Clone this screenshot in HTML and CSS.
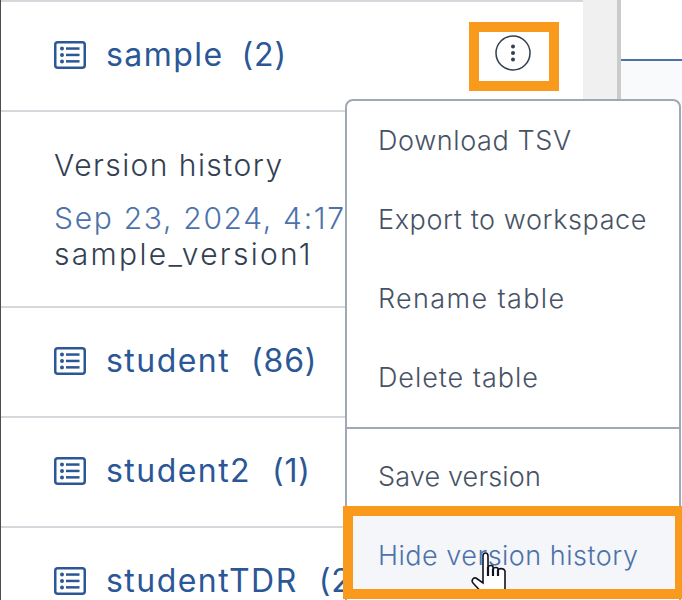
FILE: index.html
```html
<!DOCTYPE html>
<html lang="en">
<head>
<meta charset="utf-8">
<title>Tables</title>
<link rel="stylesheet" href="styles.css">
</head>
<body>
<div class="page">
  <aside class="sidebar">
    <div class="row row-first">
      <svg class="table-icon" viewBox="0 0 32 28"><rect x="1.25" y="1.25" width="29.5" height="25.5" rx="2.5" class="frame"/><circle cx="8" cy="7.6" r="2"/><circle cx="8" cy="14" r="2"/><circle cx="8" cy="20.4" r="2"/><rect x="12" y="6.3" width="13.5" height="2.5"/><rect x="12" y="12.7" width="13.5" height="2.5"/><rect x="12" y="19.1" width="13.5" height="2.5"/></svg>
      <span class="name name-short">sample</span><span class="count">(2)</span>
    </div>
    <div class="history">
      <div class="history-title">Version history</div>
      <div class="history-date">Sep 23, 2024, 4:17 PM</div>
      <div class="history-name">sample_version1</div>
    </div>
    <div class="row">
      <svg class="table-icon" viewBox="0 0 32 28"><rect x="1.25" y="1.25" width="29.5" height="25.5" rx="2.5" class="frame"/><circle cx="8" cy="7.6" r="2"/><circle cx="8" cy="14" r="2"/><circle cx="8" cy="20.4" r="2"/><rect x="12" y="6.3" width="13.5" height="2.5"/><rect x="12" y="12.7" width="13.5" height="2.5"/><rect x="12" y="19.1" width="13.5" height="2.5"/></svg>
      <span class="name">student</span><span class="count">(86)</span>
    </div>
    <div class="row">
      <svg class="table-icon" viewBox="0 0 32 28"><rect x="1.25" y="1.25" width="29.5" height="25.5" rx="2.5" class="frame"/><circle cx="8" cy="7.6" r="2"/><circle cx="8" cy="14" r="2"/><circle cx="8" cy="20.4" r="2"/><rect x="12" y="6.3" width="13.5" height="2.5"/><rect x="12" y="12.7" width="13.5" height="2.5"/><rect x="12" y="19.1" width="13.5" height="2.5"/></svg>
      <span class="name">student2</span><span class="count">(1)</span>
    </div>
    <div class="row">
      <svg class="table-icon" viewBox="0 0 32 28"><rect x="1.25" y="1.25" width="29.5" height="25.5" rx="2.5" class="frame"/><circle cx="8" cy="7.6" r="2"/><circle cx="8" cy="14" r="2"/><circle cx="8" cy="20.4" r="2"/><rect x="12" y="6.3" width="13.5" height="2.5"/><rect x="12" y="12.7" width="13.5" height="2.5"/><rect x="12" y="19.1" width="13.5" height="2.5"/></svg>
      <span class="name">studentTDR</span><span class="count">(2</span>
    </div>
  </aside>
  <div class="scroll-track"></div>
  <main class="main"><div class="main-panel"></div></main>

  <div class="kebab-box">
    <svg class="kebab" viewBox="0 0 36 36"><circle cx="18" cy="18" r="17" class="ring"/><circle cx="18" cy="11.5" r="2"/><circle cx="18" cy="18" r="2"/><circle cx="18" cy="24.5" r="2"/></svg>
  </div>

  <div class="menu">
    <div class="menu-group">
      <div class="item">Download TSV</div>
      <div class="item">Export to workspace</div>
      <div class="item item-rename">Rename table</div>
      <div class="item item-delete">Delete table</div>
    </div>
    <div class="menu-group group-last">
      <div class="item item-save">Save version</div>
      <div class="item item-hover">Hide version history</div>
    </div>
  </div>
  <svg class="cursor" viewBox="0 0 36 46"><path d="M12 4c0-4 5-4 5 0V15c1-2 5-2 5 0v2c1-2 5-2 5 0v1c1-2 6-2 7 1V44H14L2 31c-2-2 0-6 3-5l7 5Z"/><path d="M17 15v9M22 17v7M27 18v6" class="cursor-line"/></svg>
  <div class="hover-box"></div>
</div>
</body>
</html>
```
FILE: styles.css
```css
* { box-sizing: border-box; }
html, body { margin: 0; padding: 0; }
body {
  width: 682px;
  height: 600px;
  overflow: hidden;
  background: #fff;
  font-family: "Inter", "Liberation Sans", sans-serif;
}
.page {
  position: relative;
  display: flex;
  width: 682px;
  height: 600px;
  overflow: hidden;
}
.sidebar {
  width: 583px;
  flex: none;
  border-left: 1px solid #4d4d4d;
}
.row {
  display: flex;
  align-items: center;
  height: 110px;
  padding: 0 0 3px 53px;
  border-bottom: 2px solid #d5d9de;
  color: #2b5797;
  font-size: 32px;
  letter-spacing: 1.45px;
  font-weight: 400;
  white-space: nowrap;
}
.row-first {
  border-top: 2px solid #d5d9de;
  height: 112px;
}
.table-icon {
  width: 32px;
  height: 28px;
  flex: none;
  margin-right: 20px;
  fill: #2b5797;
}
.frame {
  fill: none;
  stroke: #2b5797;
  stroke-width: 2.5;
}
.name { margin-right: 21px; }
.name-short { margin-right: 18px; }
.count { letter-spacing: .8px; }
.history {
  height: 196px;
  padding: 35px 0 0 53px;
  border-bottom: 2px solid #d5d9de;
  font-size: 30px;
  font-weight: 350;
  line-height: 36px;
  letter-spacing: 1.45px;
  color: #333f52;
  overflow: hidden;
  white-space: nowrap;
}
.history-title { margin-bottom: 17px; }
.history-date { color: #4d72aa; letter-spacing: 1.7px; }
.history-name { letter-spacing: 2.3px; }
.scroll-track {
  width: 38px;
  flex: none;
  background: #f0f0f0;
  border-right: 4px solid #cbcbcb;
}
.main {
  flex: 1;
  padding-top: 59px;
  background: #fff;
}
.main-panel {
  height: 541px;
  background: #f9fafc;
  border-top: 2px solid #4d72aa;
}
.kebab-box {
  position: absolute;
  left: 469px;
  top: 22px;
  width: 90px;
  height: 69px;
  padding: 0 3px 8px 0;
  border: 10px solid #fa9a1c;
  background: #fff;
  display: flex;
  align-items: center;
  justify-content: center;
}
.kebab { width: 36px; height: 36px; fill: #333f52; }
.ring { fill: none; stroke: #333f52; stroke-width: 1.5; }
.menu {
  position: absolute;
  left: 345px;
  top: 99px;
  width: 336px;
  height: 520px;
  background: #fff;
  border: 2px solid #a0a8b5;
  border-radius: 8px;
  color: #475265;
  font-size: 27px;
  font-weight: 350;
  letter-spacing: .6px;
}
.menu-group { border-bottom: 2px solid #a0a8b5; height: 328px; }
.group-last { border-bottom: 0; height: auto; padding-top: 8px; }
.item {
  display: flex;
  align-items: center;
  height: 79px;
  padding: 0 0 1px 31px;
  white-space: nowrap;
}
.item-rename { letter-spacing: 1.35px; }
.item-delete { letter-spacing: .95px; }
.item-save { letter-spacing: .15px; }
.item-hover { background: #f4f6f9; color: #4d72aa; letter-spacing: .5px; }
.hover-box {
  position: absolute;
  left: 343px;
  top: 506px;
  width: 342px;
  height: 93px;
  border: 10px solid #fa9a1c;
}
.cursor {
  position: absolute;
  left: 471px;
  top: 552px;
  width: 36px;
  height: 46px;
  fill: #fff;
  stroke: #10131f;
  stroke-width: 1.6;
}
.cursor-line { fill: none; stroke: #10131f; stroke-width: 2.2; }
```
